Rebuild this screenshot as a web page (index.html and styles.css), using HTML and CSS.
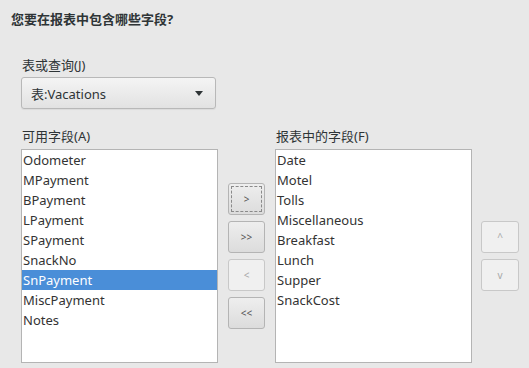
FILE: index.html
```html
<!DOCTYPE html>
<html lang="zh-CN">
<head>
  <meta charset="UTF-8" />
  <title>报表向导 - 字段选择</title>
  <link rel="stylesheet" href="styles.css">
</head>
<body>
  <div class="wizard">
    <h1 class="title">您要在报表中包含哪些字段?</h1>

    <div class="source">
      <label class="field-label">表或查询(J)</label>
      <div class="combo">
        <span>表:Vacations</span>
        <span class="combo-arrow"></span>
      </div>
    </div>

    <div class="fields">
      <label class="field-label">可用字段(A)</label>
      <div></div>
      <label class="field-label">报表中的字段(F)</label>
      <div></div>

      <ul class="listbox">
        <li>Odometer</li>
        <li>MPayment</li>
        <li>BPayment</li>
        <li>LPayment</li>
        <li>SPayment</li>
        <li>SnackNo</li>
        <li class="selected">SnPayment</li>
        <li>MiscPayment</li>
        <li>Notes</li>
      </ul>

      <div class="move-buttons">
        <button class="btn focused"><span>&gt;</span></button>
        <button class="btn">&gt;&gt;</button>
        <button class="btn" disabled>&lt;</button>
        <button class="btn">&lt;&lt;</button>
      </div>

      <ul class="listbox">
        <li>Date</li>
        <li>Motel</li>
        <li>Tolls</li>
        <li>Miscellaneous</li>
        <li>Breakfast</li>
        <li>Lunch</li>
        <li>Supper</li>
        <li>SnackCost</li>
      </ul>

      <div class="order-buttons">
        <button class="btn" disabled>^</button>
        <button class="btn" disabled>v</button>
      </div>
    </div>
  </div>
</body>
</html>
```

FILE: styles.css
```css
html, body {
  margin: 0;
  background-color: #e8e8e8;
  color: #2e3436;
  font-family: 'Noto Sans', 'Noto Sans CJK SC', sans-serif;
  font-size: 13px;
}
.wizard {
  padding: 10px 0 0 11px;
  width: 518px;
  height: 358px;
  overflow: hidden;
}
.title {
  margin: 0;
  font-size: 13px;
  font-weight: bold;
  line-height: 18px;
}
.source {
  margin: 28px 0 0 10px;
}
.field-label {
  display: block;
  line-height: 18px;
  padding-left: 1px;
}
.combo {
  box-sizing: border-box;
  width: 195px;
  height: 32px;
  margin-top: 3px;
  display: flex;
  align-items: center;
  justify-content: space-between;
  padding: 0 12px 0 9px;
  border: 1px solid #b8b8b8;
  border-radius: 3px;
  background: linear-gradient(#f4f4f4, #e2e2e2);
  box-shadow: 0 1px 1px rgba(0, 0, 0, 0.06);
}
.combo-arrow {
  width: 0;
  height: 0;
  border-left: 4px solid transparent;
  border-right: 4px solid transparent;
  border-top: 5px solid #2e3436;
}
.fields {
  margin: 18px 0 0 10px;
  display: grid;
  grid-template-columns: 197px 57px 197px 47px;
  grid-template-rows: 22px 214px;
  align-items: start;
}
.listbox {
  box-sizing: border-box;
  height: 214px;
  margin: 0;
  padding: 0;
  list-style: none;
  background: #fff;
  border: 1px solid #b4b4b4;
}
.listbox li {
  height: 20px;
  line-height: 20px;
  padding-left: 1px;
  color: #333;
}
.listbox li.selected {
  background: #4a8ed8;
  color: #fff;
}
.move-buttons, .order-buttons {
  align-self: center;
  display: flex;
  flex-direction: column;
  gap: 6px;
}
.move-buttons {
  align-items: center;
}
.order-buttons {
  padding-left: 9px;
}
.btn {
  box-sizing: border-box;
  width: 37px;
  height: 32px;
  padding: 0;
  border: 1px solid #b4b4b4;
  border-radius: 3px;
  background: linear-gradient(#eeeeee, #dcdcdc);
  color: #555;
  font-family: 'Noto Sans', sans-serif;
  font-size: 10px;
  display: flex;
  align-items: center;
  justify-content: center;
}
.order-buttons .btn {
  width: 38px;
}
.btn:disabled {
  background: #f0f0f0;
  border-color: #c8c8c8;
  color: #a8a8a8;
}
.btn.focused span {
  box-sizing: border-box;
  width: 31px;
  height: 26px;
  display: flex;
  align-items: center;
  justify-content: center;
  border: 1px dashed #8a8a8a;
}
```
